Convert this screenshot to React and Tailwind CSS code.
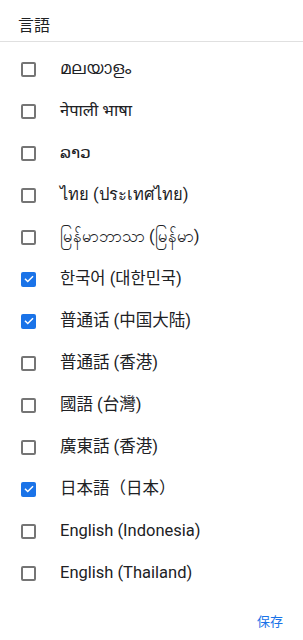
import React from "react";

const items = [
  ["മലയാളം", false],
  ["नेपाली भाषा", false],
  ["ລາວ", false],
  ["ไทย (ประเทศไทย)", false],
  ["မြန်မာဘာသာ (မြန်မာ)", false],
  ["한국어 (대한민국)", true],
  ["普通话 (中国大陆)", true],
  ["普通話 (香港)", false],
  ["國語 (台灣)", false],
  ["廣東話 (香港)", false],
  ["日本語（日本）", true],
  ["English (Indonesia)", false],
  ["English (Thailand)", false],
];

function Box({ checked }) {
  if (checked) {
    return (
      <div className="w-[15px] h-[15px] rounded-[2px] bg-[#1a73e8] flex items-center justify-center">
        <svg width="12" height="12" viewBox="0 0 24 24" fill="none">
          <path d="M5 12.5l4.5 4.5L19 7.5" stroke="white" strokeWidth="3" strokeLinecap="square" />
        </svg>
      </div>
    );
  }
  return <div className="w-[15px] h-[15px] rounded-[2px] border-2 border-[#757575]" />;
}

export default function App() {
  return (
    <div
      className="w-[303px] h-[640px] bg-white text-[#202124]"
      style={{ fontFamily: "Roboto, 'Noto Sans', 'Noto Sans CJK JP', sans-serif" }}
    >
      <div className="h-[42px] flex items-center pt-[6px] pl-[18px] text-[16px] border-b border-[#e0e0e0] text-[#202124]" style={{ fontFamily: "'Noto Sans CJK JP', sans-serif" }}>
        言語
      </div>
      <div className="pt-[6px]">
        {items.map(([label, checked], i) => (
          <div key={i} className="h-[42px] flex items-center">
            <div className="w-[60px] pl-[21px] flex items-center">
              <Box checked={checked} />
            </div>
            <span className="text-[16.5px] text-[#202124]">{label}</span>
          </div>
        ))}
      </div>
      <div className="flex justify-end pr-[20px] pt-[17px]">
        <span className="text-[13px] text-[#1a73e8]" style={{ fontFamily: "'Noto Sans CJK SC', sans-serif" }}>保存</span>
      </div>
    </div>
  );
}
